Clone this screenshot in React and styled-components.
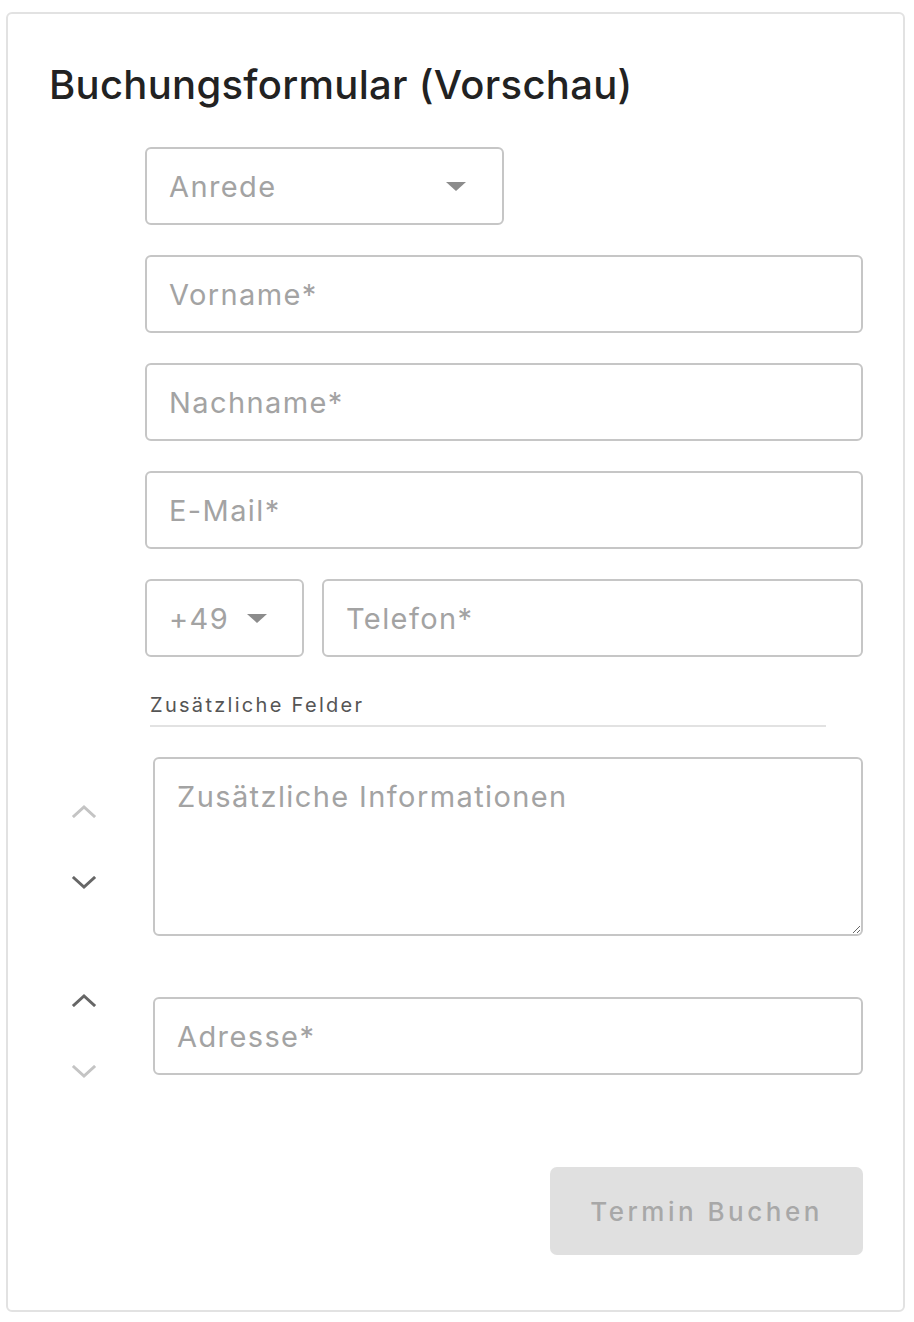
import styled, { createGlobalStyle } from "styled-components"

const Global = createGlobalStyle`
  body {
    margin: 0;
    padding: 12px 9px 10px 6px;
    font-family: Inter, "Noto Sans", sans-serif;
    background: #fff;
  }
  * { box-sizing: border-box; }
`

const Card = styled.div`
  border: 2px solid #e2e2e2;
  border-radius: 6px;
  padding: 47px 40px 55px 41px;
  width: 899px;
`

const Title = styled.h1`
  margin: 0 0 38px 0;
  font-size: 40px;
  line-height: 48px;
  font-weight: 500;
  letter-spacing: 0.3px;
  color: #222;
`

const Fields = styled.div`
  display: flex;
  flex-direction: column;
  gap: 30px;
  padding-left: 96px;
`

const Row = styled.div`
  display: flex;
  gap: 18px;
`

const Input = styled.input`
  display: block;
  width: ${p => p.$width || "100%"};
  flex: ${p => (p.$grow ? 1 : "none")};
  height: 78px;
  border: 2px solid #c6c6c6;
  border-radius: 6px;
  padding: 0 22px;
  font-family: inherit;
  font-size: 29px;
  letter-spacing: 1.4px;
  color: #333;
  outline: none;
  &::placeholder { color: #a3a3a3; }
`

const Select = styled.div`
  width: ${p => p.$width};
  height: 78px;
  border: 2px solid #c6c6c6;
  border-radius: 6px;
  padding: 0 36px 0 22px;
  display: flex;
  align-items: center;
  justify-content: ${p => (p.$tight ? "flex-start" : "space-between")};
  gap: 18px;
  font-size: 29px;
  letter-spacing: 1.4px;
  color: #a3a3a3;
`

const Caret = styled.span`
  width: 0;
  height: 0;
  border-left: 10px solid transparent;
  border-right: 10px solid transparent;
  border-top: 9px solid #8c8c8c;
`

const Section = styled.div`
  margin: 36px 37px 0 101px;
  padding-bottom: 8px;
  border-bottom: 2px solid #e2e2e2;
  font-size: 20px;
  letter-spacing: 2.3px;
  color: #555;
`

const Sortable = styled.div`
  display: flex;
  align-items: center;
  gap: 34px;
  margin-top: ${p => p.$mt};
`

const Arrows = styled.div`
  width: 70px;
  margin: -8px 0;
  display: flex;
  flex-direction: column;
  align-items: center;
  gap: 58px;
`

const ArrowBtn = styled.button`
  border: 0;
  background: none;
  padding: 0;
  width: 28px;
  height: 14px;
  display: flex;
  color: ${p => (p.$active ? "#666" : "#c4c4c4")};
  svg { width: 28px; height: 14px; }
`

const TextArea = styled.textarea`
  flex: 1;
  height: 179px;
  border: 2px solid #c6c6c6;
  border-radius: 6px;
  padding: 20px 22px;
  font-family: inherit;
  font-size: 29px;
  letter-spacing: 1.4px;
  resize: vertical;
  outline: none;
  &::placeholder { color: #a3a3a3; }
`

const Footer = styled.div`
  display: flex;
  justify-content: flex-end;
  margin-top: 92px;
`

const Submit = styled.button`
  width: 313px;
  height: 88px;
  border: 0;
  border-radius: 7px;
  background: #e0e0e0;
  color: #a8a8a8;
  font-family: inherit;
  font-size: 26px;
  font-weight: 500;
  letter-spacing: 3.5px;
`

const Chevron = ({ up }) => (
  <svg viewBox="0 0 28 14" fill="none" stroke="currentColor" strokeWidth="3" strokeLinecap="square">
    {up ? <polyline points="4,12 14,3 24,12" /> : <polyline points="4,2 14,11 24,2" />}
  </svg>
)

function MoveButtons({ canUp, canDown }) {
  return (
    <Arrows>
      <ArrowBtn $active={canUp}><Chevron up /></ArrowBtn>
      <ArrowBtn $active={canDown}><Chevron /></ArrowBtn>
    </Arrows>
  )
}

function App() {
  return (
    <>
      <Global />
      <Card>
        <Title>Buchungsformular (Vorschau)</Title>
        <Fields>
          <Select $width="359px">Anrede <Caret /></Select>
          <Input placeholder="Vorname*" />
          <Input placeholder="Nachname*" />
          <Input placeholder="E-Mail*" />
          <Row>
            <Select $width="159px" $tight>+49 <Caret /></Select>
            <Input $grow placeholder="Telefon*" />
          </Row>
        </Fields>
        <Section>Zusätzliche Felder</Section>
        <Sortable $mt="30px">
          <MoveButtons canUp={false} canDown />
          <TextArea placeholder="Zusätzliche Informationen" />
        </Sortable>
        <Sortable $mt="61px">
          <MoveButtons canUp canDown={false} />
          <Input $grow placeholder="Adresse*" />
        </Sortable>
        <Footer>
          <Submit>Termin Buchen</Submit>
        </Footer>
      </Card>
    </>
  )
}

export default App
